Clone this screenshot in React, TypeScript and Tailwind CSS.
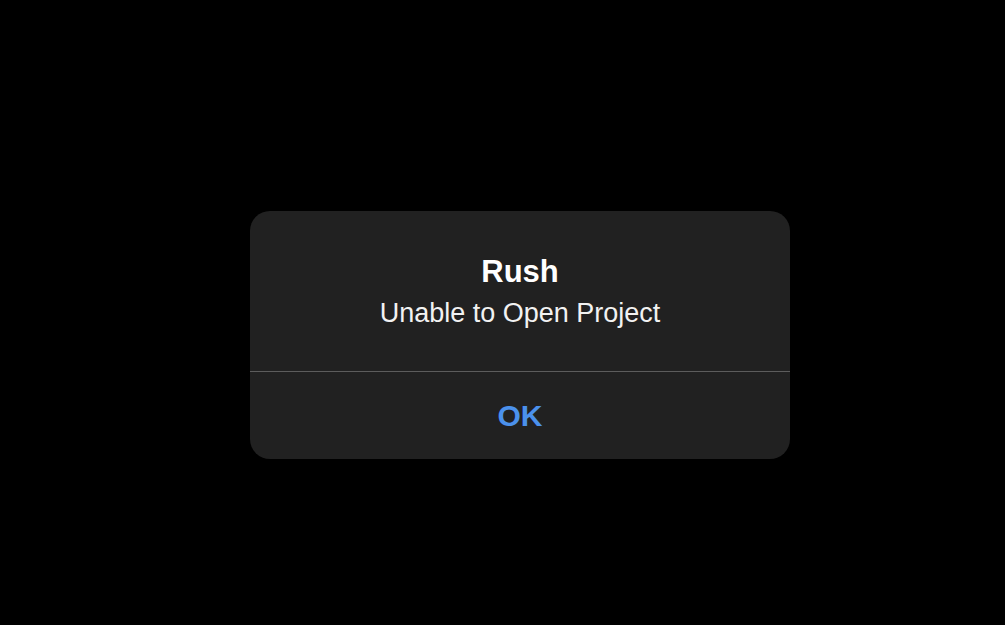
export default function App() {
  return (
    <div
      className="w-[1005px] h-[625px] bg-black pt-[211px] pl-[250px]"
      style={{ fontFamily: '"Liberation Sans", Arial, sans-serif' }}
    >
      {/* Alert */}
      <div className="w-[540px] h-[248px] rounded-[20px] bg-[#212121] flex flex-col overflow-hidden">
        <div className="h-[160px] flex flex-col items-center pt-[43px]">
          <div className="text-[31px] leading-[36px] font-semibold text-white">Rush</div>
          <div className="mt-[7px] text-[27px] leading-[32px] text-[#f2f2f2]">Unable to Open Project</div>
        </div>
        <div className="h-px bg-[#5c5c5c]" />
        <button className="flex-1 flex items-center justify-center text-[30px] leading-[36px] font-semibold text-[#4b91ec]">
          OK
        </button>
      </div>
    </div>
  );
}
